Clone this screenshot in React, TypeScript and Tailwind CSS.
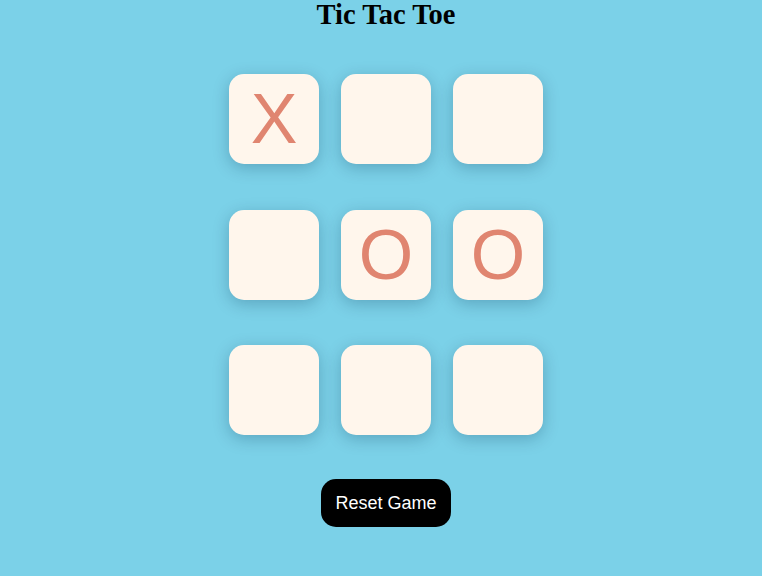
import React from "react";

const cells = ["X", "", "", "", "O", "O", "", "", ""];

export default function App() {
  return (
    <div className="min-h-[576px] w-full bg-[#7bd1e8] pl-[10px] flex flex-col items-center">
      <h1 className="m-0 mt-[1px] text-[28.5px] font-bold leading-[28px] text-black font-['Liberation_Serif','Times_New_Roman',serif]">
        Tic Tac Toe
      </h1>
      <div className="mt-[45px] grid grid-cols-[90px_90px_90px] gap-x-[22px] gap-y-[45.5px]">
        {cells.map((c, i) => (
          <div
            key={i}
            className="w-[90px] h-[90px] rounded-[15px] bg-[#fff6ec] shadow-[0_4px_16px_rgba(0,40,70,0.25)] flex items-center justify-center text-[70px] leading-none text-[#e08570] font-['Liberation_Sans',Arial,sans-serif]"
          >
            {c}
          </div>
        ))}
      </div>
      <button className="mt-[44px] w-[130px] h-[48px] rounded-[15px] bg-black text-white text-[18px] font-['Liberation_Sans',Arial,sans-serif]">
        Reset Game
      </button>
    </div>
  );
}
